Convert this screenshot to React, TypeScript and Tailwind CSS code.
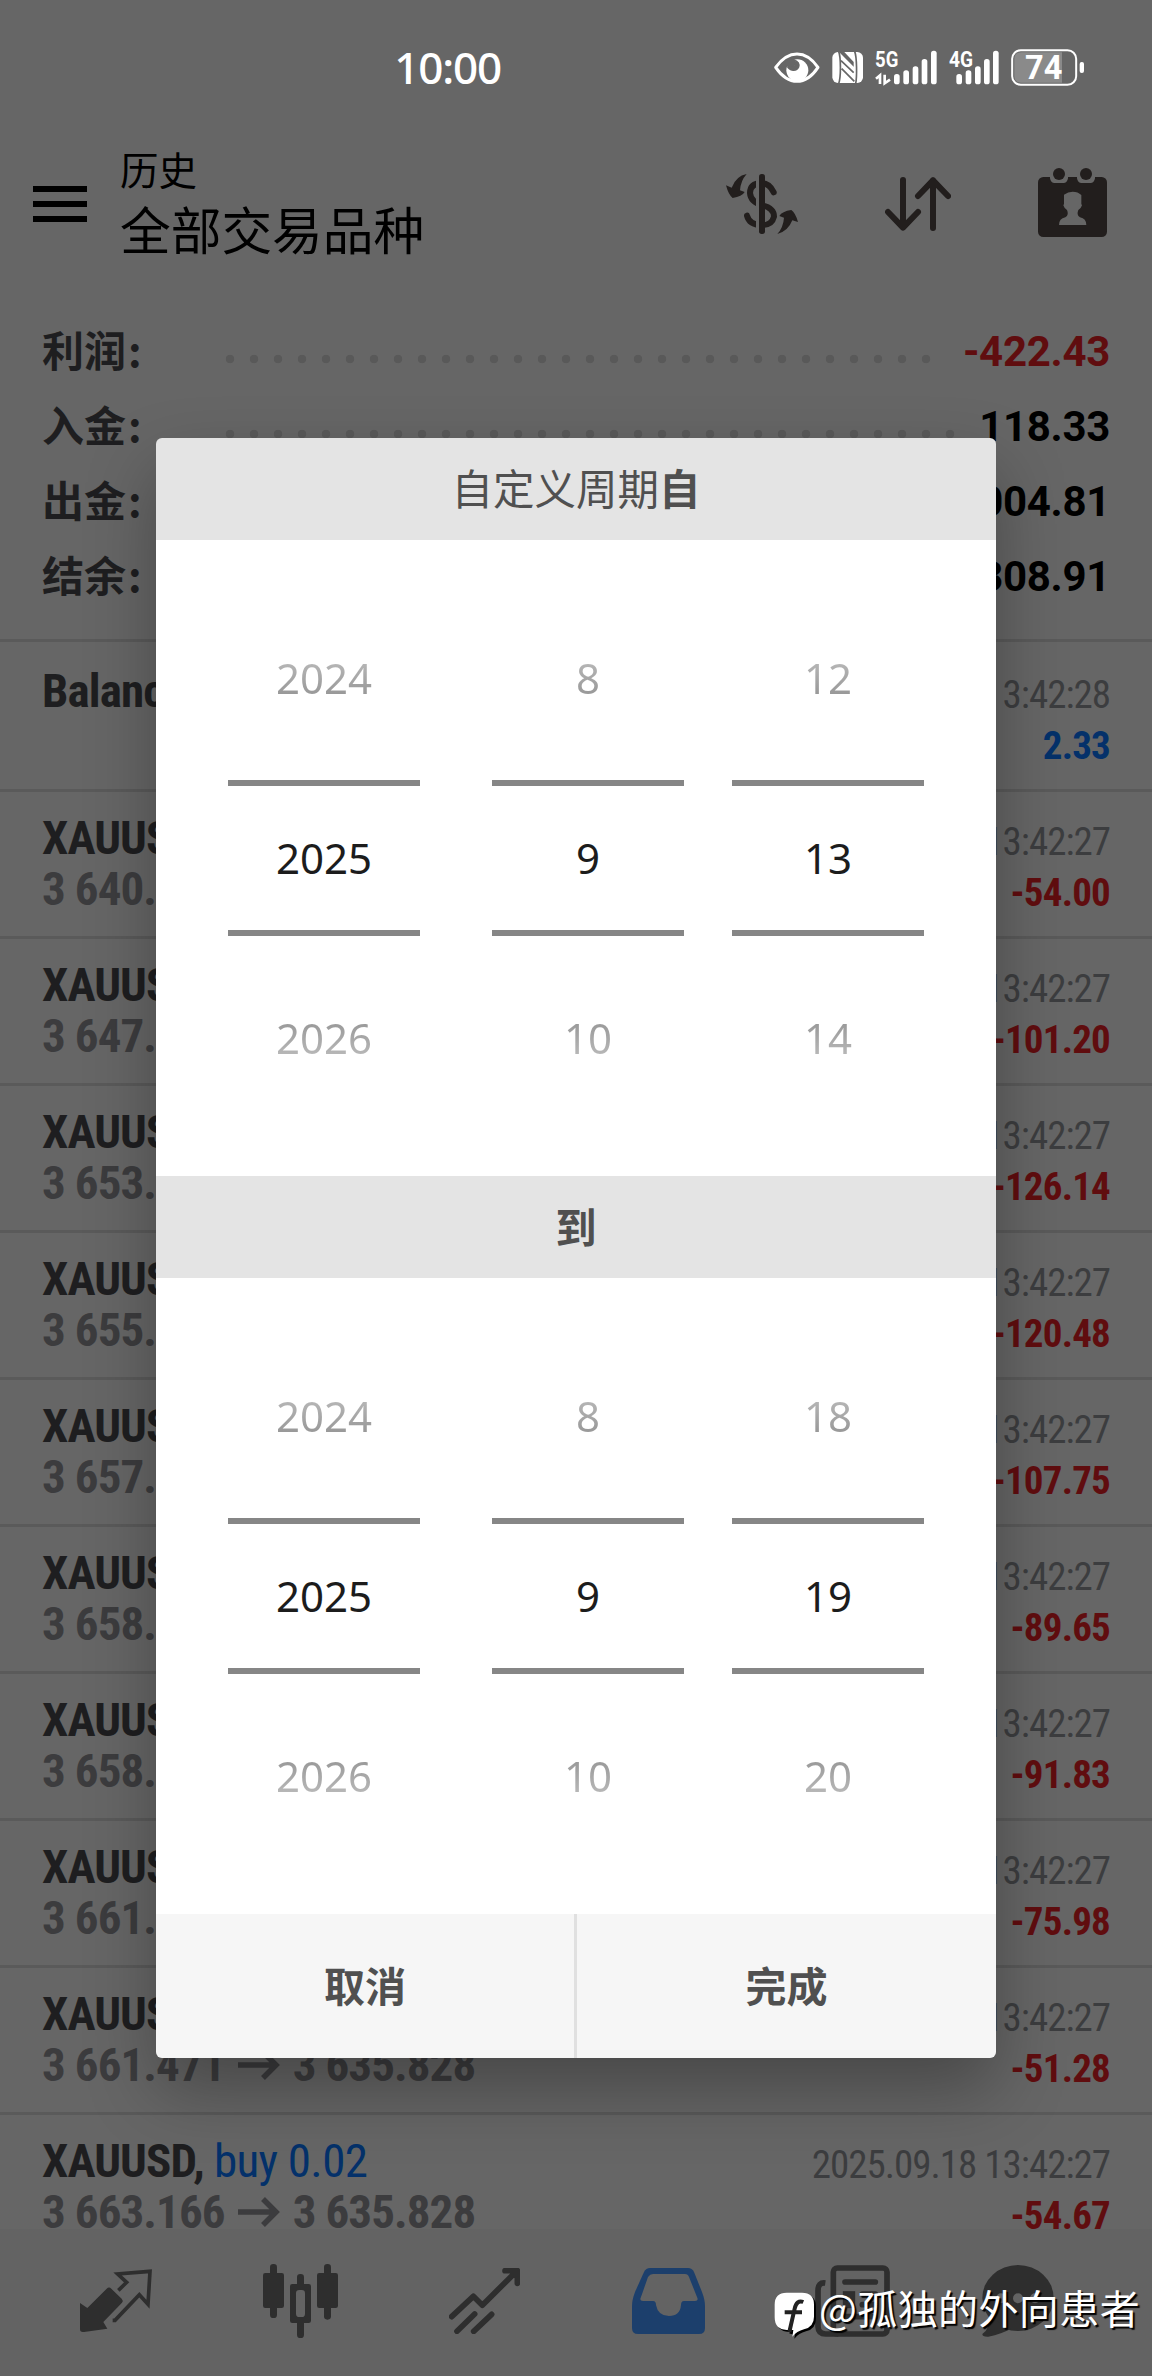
import React from 'react'
import clsx from 'clsx'

type Deal = { open: string; profit: string }

const deals: Deal[] = [
  { open: '3 640.', profit: '-54.00' },
  { open: '3 647.', profit: '-101.20' },
  { open: '3 653.', profit: '-126.14' },
  { open: '3 655.', profit: '-120.48' },
  { open: '3 657.', profit: '-107.75' },
  { open: '3 658.', profit: '-89.65' },
  { open: '3 658.', profit: '-91.83' },
  { open: '3 661.', profit: '-75.98' },
  { open: '3 661.471', profit: '-51.28' },
  { open: '3 663.166', profit: '-54.67' },
]

const summary = [
  { label: '利润', value: '-422.43', dots: 'w-[720px]', color: 'text-[#600d0f]' },
  { label: '入金', value: '118.33', dots: 'w-[744px]', color: 'text-black' },
  { label: '出金', value: '004.81', dots: 'w-[696px]', color: 'text-black' },
  { label: '结余', value: '308.91', dots: 'w-[696px]', color: 'text-black' },
]

// ─── Status bar ─────────────────────────────────────────────────────────────
const StatusIcons = () => (
  <svg className="h-[60px] w-[330px] shrink-0" viewBox="0 0 990 180" fill="#fff">
    {/* eye comfort */}
    <path d="M32 82C58 46 80 42 96 42S134 46 159 82C134 120 112 124 96 124S58 120 32 82Z" fill="none" stroke="#fff" strokeWidth="9" strokeLinejoin="round" />
    <circle cx="97" cy="91" r="33" />
    <path d="M88 58Q96 66 92 74Q86 84 76 82Q68 80 66 80L60 66L76 52Z" fill="#666" />
    <path d="M88 58Q108 66 103 82Q98 94 84 93Q70 90 65 80Q82 84 89 76Q94 66 88 58Z" fill="#666" />
    {/* nfc */}
    <rect x="202" y="36" width="92" height="93" rx="17" />
    <path d="M221 34C228 52 228 112 221 131M269 34C276 52 276 112 272 131M228 62L266 98M230 86L268 124" stroke="#666" strokeWidth="5" fill="none" />
    <path d="M222 36L266 80V66L238 36Z" fill="#666" />
    {/* sim 1 */}
    <text x="330" y="82" fontFamily="Roboto" fontWeight="700" fontSize="68" textLength="70" lengthAdjust="spacingAndGlyphs">5G</text>
    <path d="M333 116L345 106V132M359 104V130L375 119" fill="none" stroke="#fff" strokeWidth="8" />
    <rect x="387" y="102" width="17" height="31" rx="8" />
    <rect x="415" y="91" width="17" height="42" rx="8" />
    <rect x="443" y="79" width="17" height="54" rx="8" />
    <rect x="470" y="57" width="17" height="76" rx="8" />
    <rect x="498" y="32" width="17" height="101" rx="8" />
    {/* sim 2 */}
    <text x="552" y="82" fontFamily="Roboto" fontWeight="700" fontSize="68" textLength="72" lengthAdjust="spacingAndGlyphs">4G</text>
    <rect x="574" y="102" width="17" height="31" rx="8" />
    <rect x="602" y="91" width="17" height="42" rx="8" />
    <rect x="630" y="79" width="17" height="54" rx="8" />
    <rect x="657" y="57" width="17" height="76" rx="8" />
    <rect x="684" y="32" width="17" height="101" rx="8" />
    {/* battery */}
    <path d="M768 37H891V128H768Q748 128 748 108V57Q748 37 768 37Z" fill="#8a8a8a" />
    <rect x="741.5" y="30.5" width="192" height="104" rx="26" fill="none" stroke="#fff" strokeWidth="6" />
    <rect x="944" y="66" width="13" height="33" rx="6" />
    <text x="780" y="117" fontFamily="Roboto" fontWeight="700" fontSize="97" textLength="112" lengthAdjust="spacingAndGlyphs">74</text>
  </svg>
)

// ─── Header icons ───────────────────────────────────────────────────────────
const CurrencyIcon = () => (
  <svg className="h-[60px] w-[72px]" viewBox="78 102 216 180" fill="#221e1d">
    <path d="M221 157Q209 130 185 129Q150 130 150 159Q152 186 187 196Q222 204 222 230Q216 256 185 256Q148 254 141 227" fill="none" stroke="#221e1d" strokeWidth="18" strokeLinecap="round" />
    <rect x="168" y="110" width="10" height="165" fill="#666" />
    <rect x="177" y="102" width="18" height="180" rx="8" />
    <path d="M140 102Q122 122 120 151L134 156Q126 170 98 174Q86 166 78 136L95 143Q108 108 140 102Z" />
    <path d="M232 282Q250 262 252 233L238 228Q246 214 274 210Q286 218 294 246L277 241Q264 274 232 282Z" />
  </svg>
)

const SortIcon = () => (
  <svg className="h-[54px] w-[66px]" viewBox="555 111 198 162" fill="none" stroke="#221e1d" strokeWidth="18" strokeLinecap="round" strokeLinejoin="round">
    <path d="M609 120V262M564 216L609 263L654 216M699 264V121M654 168L699 121L744 168" />
  </svg>
)

const CalendarIcon = () => (
  <svg className="h-[69px] w-[69px]" viewBox="1014 84 207 207" fill="#221e1d">
    <rect x="1014" y="111" width="207" height="180" rx="16" />
    <path d="M1050 104H1104V115Q1102 129 1090 129H1064Q1052 129 1050 115ZM1131 104H1185V115Q1183 129 1171 129H1145Q1133 129 1131 115Z" fill="#666" />
    <circle cx="1077" cy="102" r="18" />
    <circle cx="1158" cy="102" r="18" />
    <path d="M1092 164Q1104 155 1118 155Q1134 155 1144 165V192L1146 196Q1143 206 1135 210Q1128 226 1140 232Q1159 236 1159 255H1077Q1077 236 1096 232Q1108 226 1101 210Q1093 206 1090 196L1092 192Z" fill="#666" />
  </svg>
)

// ─── Bottom navigation icons ────────────────────────────────────────────────
const QuotesIcon = () => (
  <svg className="h-[64px] w-[72px]" viewBox="30 47 216 192" fill="#2e2e2e">
    <path d="M30 149L52 164L110 106Q117 99 124 106L155 136Q161 142 156 148L100 206L112 226L42 236Q30 238 30 228Z" />
    <path d="M145 111L170 87L143 62L240 54L234 153L208 124L135 201H128" fill="none" stroke="#2e2e2e" strokeWidth="11" />
  </svg>
)

const ChartIcon = () => (
  <svg className="h-[74px] w-[75px]" viewBox="576 30 225 222" fill="#2e2e2e">
    <rect x="576" y="57" width="63" height="105" rx="7" />
    <rect x="597" y="30" width="21" height="162" rx="10" />
    <rect x="657" y="90" width="63" height="117" rx="7" />
    <rect x="678" y="60" width="21" height="192" rx="10" />
    <rect x="675" y="108" width="27" height="81" rx="10" fill="#636363" />
    <rect x="738" y="57" width="63" height="105" rx="7" />
    <rect x="759" y="30" width="21" height="167" rx="10" />
  </svg>
)

const TradeIcon = () => (
  <svg className="h-[66px] w-[71px]" viewBox="1134 39 213 198" fill="none" stroke="#2e2e2e" strokeWidth="17" strokeLinecap="round" strokeLinejoin="round">
    <path d="M1142 185L1207 124L1234 151L1335 50M1302 47H1339V85M1158 229L1211 177M1208 229L1262 178" />
  </svg>
)

const HistoryIcon = () => (
  <svg className="h-[66px] w-[73px]" viewBox="0 0 73 66">
    <path d="M12 4Q14 0 18 0H56Q60 0 62 4L70 24Q73 32 73 38V60Q73 66 67 66H6Q0 66 0 60V38Q0 32 3 24Z" fill="#1c3f6c" />
    <path d="M16 9Q18 6 21 6H53Q56 6 57 9L65 29Q67 33 63 33H52Q49 33 49 37Q48 48 37 48Q26 48 24 37Q24 33 21 33H11Q7 33 9 29Z" fill="#636363" />
  </svg>
)

const NewsIcon = () => (
  <svg className="h-[72px] w-[75px]" viewBox="230 105 225 216" fill="none" stroke="#2e2e2e" strokeWidth="17">
    <path d="M261 159Q239 156 239 182V290Q240 312 262 312H300" />
    <rect x="285" y="114" width="161" height="198" rx="12" />
    <path d="M320 156H411M372 192H411M372 224H411M320 260H411" strokeLinecap="round" />
    <rect x="322" y="192" width="20" height="34" />
  </svg>
)

const ChatIcon = () => (
  <svg className="h-[72px] w-[72px]" viewBox="727 105 214 216" fill="#2e2e2e">
    <ellipse cx="834" cy="204" rx="107" ry="99" />
    <path d="M748 260Q750 296 727 312Q727 321 745 320Q785 312 812 296Z" />
    <g fill="#636363">
      <circle cx="783" cy="205" r="15" />
      <circle cx="834" cy="205" r="15" />
      <circle cx="885" cy="205" r="15" />
    </g>
  </svg>
)

// ─── History rows ───────────────────────────────────────────────────────────
const BalanceRow = () => (
  <div className="flex h-[150px] shrink-0 justify-between border-t-[3px] border-[#5a5a5a] px-[42px] leading-[51px]">
    <div className="pt-[23px] text-[47px] font-bold tracking-[-0.9px] text-[#1e1e20]">Balance</div>
    <div className="flex flex-col items-end pt-[28px] text-[39px]">
      <span className="tracking-[-1px] text-[#3c3d3f]">3:42:28</span>
      <span className="font-bold tracking-[-0.8px] text-[#04316a]">2.33</span>
    </div>
  </div>
)

const DealRow: React.FC<{ deal: Deal }> = ({ deal }) => (
  <div className="flex h-[147px] shrink-0 justify-between border-t-[3px] border-[#5a5a5a] px-[42px] leading-[51px]">
    <div className="flex flex-col pt-5 text-[47px] tracking-[-0.9px] whitespace-pre">
      <span className="font-bold text-[#1e1e20]">
        XAUUSD, <span className="font-normal tracking-[-0.6px] text-[#04316a]">buy 0.02</span>
      </span>
      <span className="flex items-center font-bold text-[#3c3c3e]">
        {deal.open}
        <svg className="mr-[13px] ml-[13px] h-[30px] w-[42px]" viewBox="0 0 42 30" fill="none" stroke="#3c3c3e" strokeWidth="5.5">
          <path d="M0 15H38M25 2L38 15L25 28" />
        </svg>
        3 635.828
      </span>
    </div>
    <div className="flex flex-col items-end pt-[25px] text-[39px]">
      <span className="tracking-[-1px] text-[#3c3d3f]">2025.09.18 13:42:27</span>
      <span className="font-bold tracking-[-0.8px] text-[#600d0f]">{deal.profit}</span>
    </div>
  </div>
)

// ─── Date picker ────────────────────────────────────────────────────────────
const PickerColumn: React.FC<{ values: string[]; className?: string }> = ({ values, className }) => (
  <div className={clsx('flex w-[192px] flex-col items-center text-[42px] leading-[60px]', className)}>
    <div className="flex h-[180px] items-center">
      <span className="bg-linear-to-b from-[#c4c4c4] to-[#8c8c8c] bg-clip-text text-transparent">{values[0]}</span>
    </div>
    <div className="my-3 flex h-[156px] w-full items-center justify-center border-y-6 border-[#868686] text-[#1c1c1c]">
      {values[1]}
    </div>
    <div className="flex h-[180px] items-center">
      <span className="bg-linear-to-b from-[#8c8c8c] to-[#c4c4c4] bg-clip-text text-transparent">{values[2]}</span>
    </div>
  </div>
)

const DatePicker: React.FC<{ days: string[] }> = ({ days }) => (
  <div className="flex h-[636px] bg-white px-[72px] py-12 font-['Noto_Sans',sans-serif]">
    <PickerColumn values={['2024', '2025', '2026']} />
    <PickerColumn values={['8', '9', '10']} className="ml-[72px]" />
    <PickerColumn values={days} className="ml-12" />
  </div>
)

const PeriodDialog = () => (
  <div className="absolute top-[438px] left-[156px] w-[840px] overflow-hidden rounded-[6px] font-['Noto_Sans_CJK_SC',sans-serif] text-[#505050] shadow-[0_32px_70px_rgba(0,0,0,0.3)]">
    <div className="flex h-[102px] items-center justify-center bg-[#e4e4e4] pb-[3px] text-[41.5px]">
      自定义周期<b>自</b>
    </div>
    <DatePicker days={['12', '13', '14']} />
    <div className="flex h-[102px] items-center justify-center bg-[#e4e4e4] pb-[3px] text-[41px] font-bold">到</div>
    <DatePicker days={['18', '19', '20']} />
    <div className="flex h-36 bg-[#f6f6f6] text-[41px] font-bold">
      <button className="w-[421px] border-r-[3px] border-[#e0e0e0] pb-[3px]">取消</button>
      <button className="w-[419px] pb-[3px]">完成</button>
    </div>
  </div>
)

const Watermark = () => (
  <div className="absolute top-[2276px] left-[774px] flex items-center font-['Noto_Sans_CJK_SC',sans-serif] text-[40px] leading-[60px] tracking-[0.4px] whitespace-nowrap text-white [text-shadow:2px_2px_1px_#000]">
    <svg className="mt-4 mr-[3px] h-[46px] w-[42px] drop-shadow-[2px_2px_0_#000]" viewBox="102 184 126 138">
      <path d="M140 186H186Q222 186 222 222V258Q222 288 192 296Q170 302 157 318L160 298H140Q104 296 104 260V222Q104 186 140 186Z" fill="#fff" />
      <path d="M190 214Q170 206 164 234L148 304M134 245H186" fill="none" stroke="#222" strokeWidth="12" />
    </svg>
    @孤独的外向患者
  </div>
)

export default function App() {
  return (
    <div className="relative flex h-[2376px] w-[1152px] flex-col overflow-hidden bg-[#666] font-['Roboto','Noto_Sans_CJK_SC',sans-serif]">
      <div className="flex h-[136px] shrink-0 justify-end pt-10 pr-[57px]">
        <span className="mr-[264px] font-['Noto_Sans',sans-serif] text-[44px] leading-[54px] font-medium tracking-[-1.2px] text-white">10:00</span>
        <StatusIcons />
      </div>

      <header className="flex h-[174px] shrink-0 pl-[33px]">
        <div className="mt-[50px] flex w-[54px] flex-col gap-[9px]">
          <span className="h-[6px] bg-black" />
          <span className="h-[6px] bg-black" />
          <span className="h-[6px] bg-black" />
        </div>
        <div className="ml-[33px] w-[606px] font-['Noto_Sans_CJK_SC',sans-serif] text-black">
          <div className="mt-[2px] text-[38.5px] leading-[60px]">历史</div>
          <div className="text-[50.7px] leading-[60px]">全部交易品种</div>
        </div>
        <div className="mt-[38px]"><CurrencyIcon /></div>
        <div className="mt-[41px] ml-[87px]"><SortIcon /></div>
        <div className="mt-8 ml-[87px]"><CalendarIcon /></div>
      </header>

      <section className="h-[329px] shrink-0 px-[42px] pt-[2px]">
        {summary.map((s) => (
          <div key={s.label} className="flex h-[75px] items-center text-[42px] font-bold">
            <span className="w-[176px] pb-[3px] font-['Noto_Sans_CJK_SC',sans-serif] text-[#1e1e20]">
              {s.label}<span className="ml-[2px]">:</span>
            </span>
            <span className={clsx('mt-[18px] h-6 bg-[radial-gradient(circle,#595959_4px,transparent_4.6px)] bg-[length:24px_24px]', s.dots)} />
            <span className={clsx('ml-auto pt-[3px] tracking-[-0.3px]', s.color)}>{s.value}</span>
          </div>
        ))}
      </section>

      <main className="flex h-[1590px] shrink-0 flex-col overflow-hidden [font-stretch:75%]">
        <BalanceRow />
        {deals.map((d, i) => (
          <DealRow key={i} deal={d} />
        ))}
      </main>

      <nav className="grid h-[147px] shrink-0 grid-cols-[184px_184px_184px_184px_184px_148px] items-center justify-items-center bg-[#636363] pr-2 pb-1 pl-6">
        <QuotesIcon />
        <ChartIcon />
        <TradeIcon />
        <HistoryIcon />
        <NewsIcon />
        <ChatIcon />
      </nav>

      <PeriodDialog />
      <Watermark />
    </div>
  )
}
